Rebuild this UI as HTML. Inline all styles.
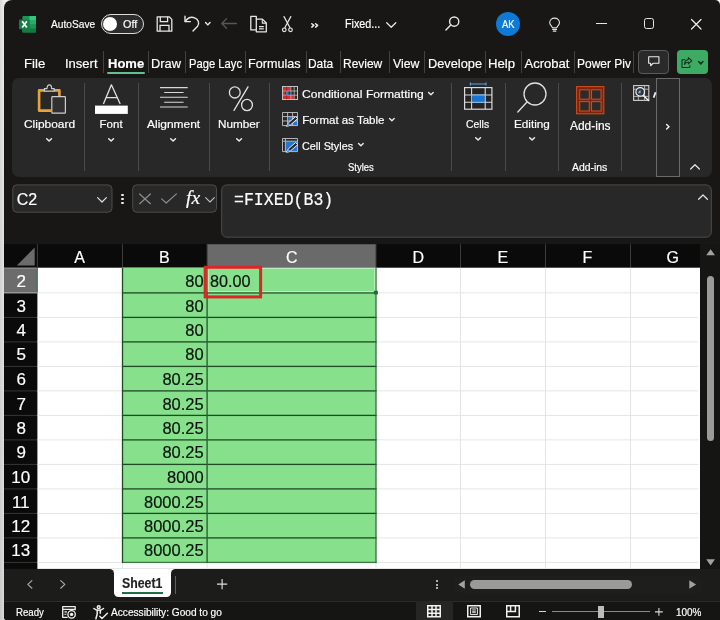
<!DOCTYPE html>
<html><head><meta charset="utf-8"><title>Excel</title>
<style>
html,body{margin:0;padding:0;}
body{width:720px;height:620px;overflow:hidden;position:relative;background:#fff;font-family:"Liberation Sans",sans-serif;}
.a{position:absolute;}
.t{position:absolute;white-space:pre;line-height:1;transform-origin:0 50%;}
#txt{position:absolute;left:0;top:0;width:720px;height:620px;will-change:transform;-webkit-text-stroke:0.18px currentColor;}
svg{position:absolute;overflow:visible;}
#win{left:4px;top:0;width:716px;height:620px;background:#191715;border-radius:8px 5px 0 3px;}
#lstrip{left:0;top:0;width:8px;height:620px;background:linear-gradient(90deg,rgba(0,0,0,.09),rgba(0,0,0,0) 4.5px),linear-gradient(180deg,#eeeeee,#e6e8e8 30%,#dcdcdc 100%);}
.sep{width:1px;background:#4b4b4b;}
.tsep{width:1px;background:#424242;top:50.5px;height:22.5px;}
.hl{height:1px;background:#e1e1e1;left:37.5px;width:662.5px;}
.vl{width:1px;background:#e1e1e1;top:268px;height:301px;}
</style></head><body>
<div class="a" id="lstrip"></div>
<div class="a" id="win"></div>

<!-- ribbon panel -->
<div class="a" style="left:12px;top:77.5px;width:699.5px;height:99.5px;background:#282828;border-radius:7px;"></div>
<!-- tab separators -->
<div class="a tsep" style="left:103px"></div><div class="a tsep" style="left:147.5px"></div><div class="a tsep" style="left:185px"></div>
<div class="a tsep" style="left:245px"></div><div class="a tsep" style="left:305.5px"></div><div class="a tsep" style="left:339.5px"></div>
<div class="a tsep" style="left:388.5px"></div><div class="a tsep" style="left:424px"></div><div class="a tsep" style="left:484.5px"></div>
<div class="a tsep" style="left:520.5px"></div><div class="a tsep" style="left:573.5px"></div><div class="a tsep" style="left:633.2px"></div>
<!-- Home underline -->
<div class="a" style="left:107.4px;top:72px;width:37.5px;height:2px;background:#62c28d;border-radius:1px;"></div>
<!-- comment & share buttons -->
<div class="a" style="left:638.1px;top:50px;width:30.6px;height:24px;background:#2a2a2a;border:1px solid #5a5a5a;border-radius:4px;box-sizing:border-box;"></div>
<div class="a" style="left:676.9px;top:50px;width:31.2px;height:24px;background:#3dab63;border-radius:4px;"></div>
<!-- ribbon separators -->
<div class="a sep" style="left:84px;top:82.5px;height:88px"></div>
<div class="a sep" style="left:138.3px;top:82.5px;height:88px"></div>
<div class="a sep" style="left:209px;top:82.5px;height:88px"></div>
<div class="a sep" style="left:269.3px;top:82.5px;height:88px"></div>
<div class="a sep" style="left:451.2px;top:82.5px;height:88px"></div>
<div class="a sep" style="left:504.7px;top:82.5px;height:88px"></div>
<div class="a sep" style="left:558px;top:82.5px;height:88px"></div>
<div class="a sep" style="left:621px;top:82.5px;height:88px"></div>
<!-- ribbon scroll btn -->
<div class="a" style="left:655.6px;top:77.5px;width:24.2px;height:99px;background:#282828;border:1px solid #6a6a6a;box-sizing:border-box;"></div>

<!-- formula bar -->
<svg style="left:0;top:0" width="720" height="620" viewBox="0 0 720 620" fill="#282828" stroke="#4c4c4c" stroke-width="1">
<rect x="12.8" y="184.9" width="99.2" height="27.3" rx="4"/>
<rect x="132.7" y="184.9" width="83.8" height="27.3" rx="4"/>
<rect x="221.7" y="184.9" width="489.6" height="52.3" rx="5"/>
</svg>
<!-- grid -->
<svg style="left:0;top:0" width="720" height="620" viewBox="0 0 720 620">
<rect x="4" y="244.2" width="696" height="324.7" fill="#0a0a0a"/>
<rect x="37.4" y="267.7" width="662.6" height="301.2" fill="#fff"/>
<rect x="207.1" y="244.2" width="168.9" height="23.5" fill="#6a6a6a"/>
<rect x="4" y="267.9" width="33" height="24.9" fill="#6c6c6c"/>
<rect x="4" y="267.6" width="33" height="1" fill="#9a9a9a"/>
<rect x="4" y="292.30" width="33" height="1.1" fill="#b4b4b4"/>
<rect x="36.6" y="267.7" width="1.1" height="25.1" fill="#3f6f57"/>
<rect x="36.90" y="244.2" width="1" height="23.5" fill="#3c3c3c"/>
<rect x="122.00" y="244.2" width="1" height="23.5" fill="#3c3c3c"/>
<rect x="206.60" y="244.2" width="1" height="23.5" fill="#3c3c3c"/>
<rect x="375.50" y="244.2" width="1" height="23.5" fill="#3c3c3c"/>
<rect x="460.00" y="244.2" width="1" height="23.5" fill="#3c3c3c"/>
<rect x="545.00" y="244.2" width="1" height="23.5" fill="#3c3c3c"/>
<rect x="630.00" y="244.2" width="1" height="23.5" fill="#3c3c3c"/>
<rect x="4" y="316.90" width="33" height="1" fill="#363636"/>
<rect x="4" y="341.40" width="33" height="1" fill="#363636"/>
<rect x="4" y="365.90" width="33" height="1" fill="#363636"/>
<rect x="4" y="390.40" width="33" height="1" fill="#363636"/>
<rect x="4" y="414.90" width="33" height="1" fill="#363636"/>
<rect x="4" y="439.40" width="33" height="1" fill="#363636"/>
<rect x="4" y="463.90" width="33" height="1" fill="#363636"/>
<rect x="4" y="488.40" width="33" height="1" fill="#363636"/>
<rect x="4" y="512.90" width="33" height="1" fill="#363636"/>
<rect x="4" y="537.40" width="33" height="1" fill="#363636"/>
<rect x="4" y="561.90" width="33" height="1" fill="#363636"/>
<rect x="37.4" y="292.40" width="661" height="1" fill="#e5e5e5"/>
<rect x="37.4" y="316.90" width="661" height="1" fill="#e5e5e5"/>
<rect x="37.4" y="341.40" width="661" height="1" fill="#e5e5e5"/>
<rect x="37.4" y="365.90" width="661" height="1" fill="#e5e5e5"/>
<rect x="37.4" y="390.40" width="661" height="1" fill="#e5e5e5"/>
<rect x="37.4" y="414.90" width="661" height="1" fill="#e5e5e5"/>
<rect x="37.4" y="439.40" width="661" height="1" fill="#e5e5e5"/>
<rect x="37.4" y="463.90" width="661" height="1" fill="#e5e5e5"/>
<rect x="37.4" y="488.40" width="661" height="1" fill="#e5e5e5"/>
<rect x="37.4" y="512.90" width="661" height="1" fill="#e5e5e5"/>
<rect x="37.4" y="537.40" width="661" height="1" fill="#e5e5e5"/>
<rect x="37.4" y="561.90" width="661" height="1" fill="#e5e5e5"/>
<rect x="122.00" y="267.7" width="1" height="301.2" fill="#e5e5e5"/>
<rect x="206.60" y="267.7" width="1" height="301.2" fill="#e5e5e5"/>
<rect x="375.50" y="267.7" width="1" height="301.2" fill="#e5e5e5"/>
<rect x="460.00" y="267.7" width="1" height="301.2" fill="#e5e5e5"/>
<rect x="545.00" y="267.7" width="1" height="301.2" fill="#e5e5e5"/>
<rect x="630.00" y="267.7" width="1" height="301.2" fill="#e5e5e5"/>
<rect x="122.5" y="267.7" width="253.5" height="294.70" fill="#86e08c"/>
<rect x="122" y="292.25" width="254.6" height="1.3" fill="#1f4a25"/>
<rect x="122" y="316.75" width="254.6" height="1.3" fill="#1f4a25"/>
<rect x="122" y="341.25" width="254.6" height="1.3" fill="#1f4a25"/>
<rect x="122" y="365.75" width="254.6" height="1.3" fill="#1f4a25"/>
<rect x="122" y="390.25" width="254.6" height="1.3" fill="#1f4a25"/>
<rect x="122" y="414.75" width="254.6" height="1.3" fill="#1f4a25"/>
<rect x="122" y="439.25" width="254.6" height="1.3" fill="#1f4a25"/>
<rect x="122" y="463.75" width="254.6" height="1.3" fill="#1f4a25"/>
<rect x="122" y="488.25" width="254.6" height="1.3" fill="#1f4a25"/>
<rect x="122" y="512.75" width="254.6" height="1.3" fill="#1f4a25"/>
<rect x="122" y="537.25" width="254.6" height="1.3" fill="#1f4a25"/>
<rect x="122" y="561.75" width="254.6" height="1.3" fill="#3a7a45"/>
<rect x="121.85" y="267.7" width="1.3" height="295.30" fill="#1d4a22"/>
<rect x="206.4" y="267.7" width="1.4" height="295.30" fill="#2c6435"/>
<rect x="375.4" y="267.7" width="1.2" height="295.30" fill="#2b6636"/>
<rect x="208.2" y="268.3" width="166.6" height="23.40" fill="none" stroke="rgba(255,255,255,.55)" stroke-width="1"/>
<rect x="373.9" y="290.80" width="4" height="3.6" fill="#1e6b3c"/>
<rect x="205.2" y="267.3" width="55.4" height="29.6" fill="none" stroke="#de2424" stroke-width="3"/>
</svg>
<!-- v scrollbar -->
<div class="a" style="left:700px;top:244px;width:20px;height:325px;background:#151514;"></div>
<div class="a" style="left:706.5px;top:276px;width:7.4px;height:165px;background:#9b9b9b;border-radius:4px;"></div>

<!-- sheet tab bar -->
<div class="a" style="left:4px;top:569px;width:716px;height:31.5px;background:#fff;"></div>
<div class="a" style="left:4px;top:569px;width:109.7px;height:31.5px;background:#1c1c1a;border-radius:0 4.5px 0 0;"></div>
<div class="a" style="left:171.2px;top:569px;width:548.8px;height:31.5px;background:#1c1c1a;border-radius:4.5px 0 0 0;"></div>
<div class="a" style="left:100px;top:590px;width:90px;height:10.5px;background:#1c1c1a;"></div>
<div class="a" style="left:113.7px;top:569px;width:57.5px;height:28px;background:#fff;border-radius:0 0 4.5px 4.5px;"></div>
<div class="a" style="left:122px;top:592px;width:41px;height:2px;background:#1d7044;"></div>
<div class="a" style="left:175px;top:576px;width:1px;height:18px;background:#606060;"></div>
<div class="a" style="left:452.5px;top:576px;width:250px;height:16.5px;background:#1e1e1c;border-radius:8px;"></div>
<div class="a" style="left:470.2px;top:580px;width:161.8px;height:8.5px;background:#9a9a9a;border-radius:4.5px;"></div>
<!-- status bar -->
<div class="a" style="left:4px;top:600.5px;width:716px;height:19.5px;background:#151514;border-top:1px solid #2c2c2b;box-sizing:border-box;border-radius:0 0 0 3px;"></div>
<div class="a" style="left:415.5px;top:601px;width:37.5px;height:19px;background:#262625;"></div>
<div class="a" style="left:552px;top:611.2px;width:98px;height:1px;background:#8a8a8a;"></div>
<div class="a" style="left:598.2px;top:606px;width:5.4px;height:11.5px;background:#bdbdbd;"></div>

<!-- ===== TITLE BAR ICONS ===== -->
<!-- excel logo -->
<svg style="left:19.3px;top:15.6px" width="17" height="16.4" viewBox="0 0 17 16.4">
  <rect x="3.4" y="0" width="13.6" height="16.4" rx="1" fill="#1c9454"/>
  <rect x="10.4" y="0" width="6.6" height="4.4" fill="#35c583"/>
  <rect x="10.4" y="4.4" width="6.6" height="4" fill="#27ad69"/>
  <rect x="10.4" y="8.4" width="6.6" height="4" fill="#1c9454"/>
  <rect x="10.4" y="12.4" width="6.6" height="4" fill="#15793f"/>
  <rect x="3.4" y="8.4" width="7" height="8" fill="#167a42"/>
  <rect x="0" y="3.4" width="10.7" height="9.9" rx="1" fill="#128044"/>
  <path d="M3.2 5.2 L7.9 11.6 M7.9 5.2 L3.2 11.6" stroke="#fff" stroke-width="1.7" fill="none"/>
</svg>
<!-- autosave toggle -->
<div class="a" style="left:100.7px;top:14.2px;width:43.5px;height:19.8px;border:1.3px solid #dcdcdc;background:#2c2c2c;border-radius:11px;box-sizing:border-box;"></div>
<div class="a" style="left:103.3px;top:17.1px;width:14px;height:14px;border-radius:50%;background:#fff;"></div>
<!-- save -->
<svg style="left:155.5px;top:16px" width="17" height="16" viewBox="0 0 17 16" fill="none" stroke="#e6e6e6" stroke-width="1.3">
  <path d="M1.2 0.8 H13.2 L15.8 3.4 V15.2 H1.2 Z" stroke-linejoin="round"/>
  <path d="M4.3 0.8 V5.6 H11.6 V0.8"/>
  <path d="M4 15.2 V9.3 H13 V15.2"/>
</svg>
<!-- undo -->
<svg style="left:184px;top:15px" width="16" height="17" viewBox="0 0 16 17" fill="none" stroke="#e6e6e6" stroke-width="1.4" stroke-linecap="round" stroke-linejoin="round">
  <path d="M1 1.2 V6.6 H6.4"/>
  <path d="M1.3 6.4 C3.5 3.2 7.2 1.6 10.6 2.8 C14.4 4.2 15.8 8.2 13.6 11.2 L9 16"/>
</svg>
<svg style="left:205.2px;top:22px" width="5.6" height="3.6" viewBox="0 0 6 4" fill="none" stroke="#ececec" stroke-width="1.6" stroke-linecap="round" stroke-linejoin="round"><path d="M0.5 0.6 L3 3.2 L5.5 0.6"/></svg>
<!-- back arrow dim -->
<svg style="left:221px;top:17.5px" width="16" height="11" viewBox="0 0 16 11" fill="none" stroke="#575757" stroke-width="1.3" stroke-linecap="round" stroke-linejoin="round"><path d="M15.5 5.5 H1 M5.5 0.8 L0.8 5.5 L5.5 10.2"/></svg>
<!-- copy -->
<svg style="left:250px;top:15px" width="17" height="17.5" viewBox="0 0 17 17.5" fill="none" stroke="#e6e6e6" stroke-width="1.3" stroke-linejoin="round">
  <path d="M6 14.9 H0.8 V1.4 H6.3 V4"/>
  <path d="M6.3 4.1 H12.4 L16.3 8 V16.8 H6.3 Z" fill="#191715"/>
  <path d="M12.3 4.1 V8.1 H16.3" stroke-width="1.1"/>
  <path d="M9 11.6 H13.8 M9 13.8 H13.8" stroke-width="1.2"/>
</svg>
<!-- scissors -->
<svg style="left:281.5px;top:15.6px" width="10.8" height="16.4" viewBox="0 0 10.8 16.4" fill="none" stroke="#e6e6e6" stroke-width="1.2" stroke-linecap="round">
  <path d="M2 0.6 L8 11.8 M8.8 0.6 L2.8 11.8"/>
  <circle cx="2.3" cy="13.8" r="1.8"/><circle cx="8.5" cy="13.8" r="1.8"/>
</svg>
<!-- >> -->
<svg style="left:311.4px;top:22.6px" width="7.8" height="4.8" viewBox="0 0 7.8 4.8" fill="none" stroke="#ececec" stroke-width="1.5" stroke-linecap="round" stroke-linejoin="round"><path d="M0.8 0.7 L2.8 2.4 L0.8 4.1 M4.6 0.7 L6.6 2.4 L4.6 4.1"/></svg>
<!-- title chevron -->
<svg style="left:386px;top:21.5px" width="10.5" height="6" viewBox="0 0 10.5 6" fill="none" stroke="#e6e6e6" stroke-width="1.3" stroke-linecap="round" stroke-linejoin="round"><path d="M0.7 0.7 L5.25 5.2 L9.8 0.7"/></svg>
<!-- search -->
<svg style="left:445px;top:16px" width="15" height="15" viewBox="0 0 15 15" fill="none" stroke="#e6e6e6" stroke-width="1.4" stroke-linecap="round"><circle cx="9.2" cy="5.6" r="4.6"/><path d="M5.8 9 L0.9 14"/></svg>
<!-- avatar -->
<div class="a" style="left:496px;top:12.2px;width:24px;height:24px;border-radius:50%;background:#0f7ad6;"></div>
<!-- bulb -->
<svg style="left:548.6px;top:16.8px" width="11.2" height="15.4" viewBox="0 0 12.5 16" fill="none" stroke="#e6e6e6" stroke-width="1.2" stroke-linecap="round" stroke-linejoin="round">
  <path d="M3.8 11.4 C3.6 9.6 0.8 8.6 0.8 5.8 C0.8 2.8 3.2 0.7 6.25 0.7 C9.3 0.7 11.7 2.8 11.7 5.8 C11.7 8.6 8.9 9.6 8.7 11.4 Z"/>
  <path d="M4 13.2 H8.5 M4.8 15.2 H7.7"/>
</svg>
<!-- min / max / close -->
<div class="a" style="left:596px;top:22.6px;width:10.5px;height:1.2px;background:#e6e6e6;"></div>
<div class="a" style="left:643.5px;top:18.3px;width:10.5px;height:10.5px;border:1.3px solid #e6e6e6;border-radius:2.5px;box-sizing:border-box;"></div>
<svg style="left:691px;top:19px" width="10.5" height="10.5" viewBox="0 0 10.5 10.5" fill="none" stroke="#f0f0f0" stroke-width="1.2" stroke-linecap="round"><path d="M0.5 0.5 L10 10 M10 0.5 L0.5 10"/></svg>

<!-- comment icon -->
<svg style="left:647.8px;top:56.2px" width="11.6" height="10.8" viewBox="0 0 14 13" fill="none" stroke="#ededed" stroke-width="1.3" stroke-linejoin="round"><path d="M0.8 0.8 H13.2 V8.8 H6 L3.2 11.8 V8.8 H0.8 Z"/></svg>
<!-- share icon -->
<svg style="left:681.2px;top:56.8px" width="11.8" height="11.4" viewBox="0 0 14 14" fill="none" stroke="#10331c" stroke-width="1.3" stroke-linejoin="round" stroke-linecap="round">
  <path d="M4.6 3.4 H1 V13 H10.6 V10.6"/>
  <path d="M8.8 0.8 L13 4.6 L8.8 8.4 V6.2 C6.4 6.2 5 7.2 4 9.2 C4.2 5.8 5.8 3.4 8.8 3 Z"/>
</svg>
<svg style="left:698.4px;top:60.8px" width="5.6" height="3.6" viewBox="0 0 6 4" fill="none" stroke="#10331c" stroke-width="1.7" stroke-linecap="round" stroke-linejoin="round"><path d="M0.6 0.6 L3 3.2 L5.4 0.6"/></svg>

<!-- ===== RIBBON ICONS ===== -->
<!-- clipboard -->
<svg style="left:37px;top:84px" width="30" height="31" viewBox="0 0 30 31" fill="none">
  <path d="M8 6.4 H2.1 V26.6 H14" stroke="#e9a23b" stroke-width="2.6" stroke-linejoin="round"/>
  <path d="M16.6 6.4 H22.4 V12" stroke="#e9a23b" stroke-width="2.6" stroke-linejoin="round"/>
  <path d="M7.4 7.2 V4.6 H10 C10 2.4 11 0.8 12.3 0.8 C13.6 0.8 14.6 2.4 14.6 4.6 H17.2 V7.2 Z" stroke="#cfcfcf" stroke-width="1.2" fill="#282828" stroke-linejoin="round"/>
  <rect x="14.8" y="12.6" width="13.6" height="16.6" rx="0.8" fill="#303030" stroke="#cdcdcd" stroke-width="1.2"/>
</svg>
<!-- Font A -->
<svg style="left:94.8px;top:84px" width="33" height="30" viewBox="0 0 33 30" fill="none">
  <path d="M8.4 20 L16.4 0.8 L25.2 20 M11 13.6 H22.4" stroke="#e2e2e2" stroke-width="1.3" stroke-linejoin="round"/>
  <rect x="0" y="21.6" width="32.8" height="8.3" fill="#fff"/>
</svg>
<!-- alignment -->
<svg style="left:159.8px;top:87px" width="28" height="21" viewBox="0 0 28 21" stroke="#d8d8d8" stroke-width="1.1">
  <path d="M0 0.6 H27.7 M4.2 5.5 H23.6 M0 10.2 H27.7 M4.2 15.3 H23.6 M0 20 H27.7"/>
</svg>
<!-- percent -->
<svg style="left:227.5px;top:85.5px" width="25" height="25" viewBox="0 0 25 25" fill="none" stroke="#e0e0e0" stroke-width="1.3" stroke-linecap="round">
  <ellipse cx="6.8" cy="6.4" rx="5.4" ry="5.6"/><ellipse cx="19" cy="19" rx="5.4" ry="5.6"/><path d="M20 0.8 L6 24.4"/>
</svg>
<!-- Conditional formatting -->
<svg style="left:282px;top:86px" width="16" height="14" viewBox="0 0 16 14">
  <rect x="0.5" y="0.5" width="15" height="13" fill="#2a2a2a" stroke="#c4c4c4" stroke-width="1"/>
  <rect x="1" y="1" width="7.6" height="3.8" fill="#e22a2a"/>
  <rect x="1" y="5.3" width="2.2" height="3.6" fill="#e22a2a"/>
  <rect x="3.8" y="5.3" width="2.8" height="3.6" fill="#2f7de0"/>
  <rect x="1" y="9.4" width="10.6" height="3.6" fill="#e22a2a"/>
  <path d="M8.9 0.5 V13.5 M12.2 0.5 V13.5 M0.5 5 H15.5 M0.5 9.2 H15.5" stroke="#bdbdbd" stroke-width="0.8"/>
  <path d="M4.6 0.5 V5 M4.6 9.2 V13.5" stroke="#8a1a1a" stroke-width="0.6"/>
</svg>
<!-- Format as table -->
<svg style="left:282px;top:112.4px" width="16.4" height="14.6" viewBox="0 0 16.4 14.6" fill="none">
  <rect x="6.4" y="4.4" width="9.4" height="9.2" fill="#2677d4"/>
  <path d="M0.5 0.5 H15.5 V13.6 H0.5 Z M0.5 4.6 H15.5 M0.5 9 H15.5 M5.6 0.5 V13.6 M10.6 0.5 V13.6" stroke="#c4c4c4" stroke-width="0.9"/>
  <path d="M13.6 4.6 L15.8 6.6 L8.6 12.8 C7.4 13.8 5.6 14.4 4.2 14.2 C5.4 13.4 5.2 12 6.4 10.8 Z" fill="#2a2a2a" stroke="#ececec" stroke-width="1" stroke-linejoin="round"/>
  <path d="M6.6 11 L8.4 12.8 C7.4 13.6 5.8 14.2 4.6 14 C5.6 13.2 5.6 12 6.6 11 Z" fill="#5aa0ea"/>
</svg>
<!-- Cell styles -->
<svg style="left:282px;top:138px" width="16.4" height="14.6" viewBox="0 0 16.4 14.6" fill="none">
  <rect x="3.6" y="3.4" width="11.6" height="9.8" fill="#2677d4"/>
  <path d="M0.5 0.5 H15.5 V13.6 H0.5 Z M0.5 3.2 H15.5 M3.4 0.5 V13.6" stroke="#c4c4c4" stroke-width="0.9"/>
  <path d="M13.6 4.6 L15.8 6.6 L8.6 12.8 C7.4 13.8 5.6 14.4 4.2 14.2 C5.4 13.4 5.2 12 6.4 10.8 Z" fill="#2a2a2a" stroke="#ececec" stroke-width="1" stroke-linejoin="round"/>
  <path d="M6.6 11 L8.4 12.8 C7.4 13.6 5.8 14.2 4.6 14 C5.6 13.2 5.6 12 6.6 11 Z" fill="#5aa0ea"/>
</svg>
<!-- cells -->
<svg style="left:464px;top:81.5px" width="28.5" height="27.5" viewBox="0 0 28.5 27.5" fill="none">
  <path d="M6.4 2 H22 M6.4 0.5 V3.5 M22 0.5 V3.5" stroke="#5aa3e6" stroke-width="1.1"/>
  <rect x="0.6" y="5.6" width="27.3" height="21.6" fill="#232323" stroke="#dadada" stroke-width="1.2"/>
  <path d="M7.6 5.6 V27.2 M21.2 5.6 V27.2 M0.6 13 H28 M0.6 20.2 H28" stroke="#dadada" stroke-width="1.1"/>
  <rect x="8.2" y="13.6" width="12.4" height="6" fill="#1574d4"/>
  <path d="M7.6 13 H21.2 V20.2 H7.6 Z" stroke="#7db9f0" stroke-width="0.9"/>
</svg>
<!-- editing magnifier -->
<svg style="left:517px;top:82px" width="30" height="31" viewBox="0 0 30 31" fill="none" stroke="#e0e0e0" stroke-width="1.3" stroke-linecap="round"><circle cx="18" cy="12" r="11"/><path d="M10 20 L0.8 30"/></svg>
<!-- add-ins -->
<svg style="left:575.8px;top:85.7px" width="28.4" height="28.4" viewBox="0 0 28.4 28.4" fill="none">
  <rect x="0.6" y="0.6" width="27.2" height="27.2" fill="#7c230b" stroke="#cc4c1d" stroke-width="1.1"/>
  <rect x="3.7" y="3.8" width="9.6" height="9.4" fill="#2b2b2b" stroke="#cc4c1d" stroke-width="1.1"/>
  <rect x="15.5" y="3.8" width="9.6" height="9.4" fill="#2b2b2b" stroke="#cc4c1d" stroke-width="1.1"/>
  <rect x="3.7" y="15.6" width="9.6" height="9.4" fill="#2b2b2b" stroke="#cc4c1d" stroke-width="1.1"/>
  <rect x="15.5" y="15.6" width="9.6" height="9.4" fill="#2b2b2b" stroke="#cc4c1d" stroke-width="1.1"/>
</svg>
<!-- analyze data partial -->
<svg style="left:632.8px;top:85px" width="24" height="16.5" viewBox="0 0 24 16.5" fill="none">
  <rect x="0.6" y="0.6" width="15.2" height="14.8" fill="#2e2e2e" stroke="#d0d0d0" stroke-width="1.1"/>
  <path d="M0.6 4.2 H15.8 M0.6 11.4 H15.8 M11.6 0.6 V15.4 M5.4 11.4 V15.4" stroke="#bdbdbd" stroke-width="0.9"/>
  <circle cx="7.2" cy="6.9" r="4.3" fill="#30363c" stroke="#f2f2f2" stroke-width="1.2"/>
  <path d="M5.2 8.2 C5.2 6.6 6.2 5.4 7.6 5.2 V8.2 Z" fill="#7db4e6"/>
  <path d="M10.4 10.4 L15.6 15.4" stroke="#f2f2f2" stroke-width="1.4" stroke-linecap="round"/>
  <path d="M20.6 12.6 L22.6 7.2" stroke="#f0f0f0" stroke-width="1.8"/>
</svg>
<!-- scroll right chevron -->
<svg style="left:666px;top:124px" width="3.8" height="5.6" viewBox="0 0 5 7.5" fill="none" stroke="#f4f4f4" stroke-width="1.9" stroke-linecap="round" stroke-linejoin="round"><path d="M0.8 0.7 L4 3.75 L0.8 6.8"/></svg>
<!-- collapse ^ -->
<svg style="left:690.3px;top:163.7px" width="10" height="5.6" viewBox="0 0 10 5.6" fill="none" stroke="#e6e6e6" stroke-width="1.2" stroke-linecap="round" stroke-linejoin="round"><path d="M0.6 5 L5 0.7 L9.4 5"/></svg>
<!-- label chevrons (group dropdowns) -->
<svg style="left:46.2px;top:137.7px" width="6.2" height="3.8" viewBox="0 0 6.2 3.8" fill="none" stroke="#ececec" stroke-width="1.5" stroke-linecap="round" stroke-linejoin="round"><path d="M0.7 0.7 L3.1 3 L5.5 0.7"/></svg>
<svg style="left:107.9px;top:137.7px" width="6.2" height="3.8" viewBox="0 0 6.2 3.8" fill="none" stroke="#ececec" stroke-width="1.5" stroke-linecap="round" stroke-linejoin="round"><path d="M0.7 0.7 L3.1 3 L5.5 0.7"/></svg>
<svg style="left:170.2px;top:137.7px" width="6.2" height="3.8" viewBox="0 0 6.2 3.8" fill="none" stroke="#ececec" stroke-width="1.5" stroke-linecap="round" stroke-linejoin="round"><path d="M0.7 0.7 L3.1 3 L5.5 0.7"/></svg>
<svg style="left:236.2px;top:137.7px" width="6.2" height="3.8" viewBox="0 0 6.2 3.8" fill="none" stroke="#ececec" stroke-width="1.5" stroke-linecap="round" stroke-linejoin="round"><path d="M0.7 0.7 L3.1 3 L5.5 0.7"/></svg>
<svg style="left:474.8px;top:137.3px" width="6.2" height="3.8" viewBox="0 0 6.2 3.8" fill="none" stroke="#ececec" stroke-width="1.5" stroke-linecap="round" stroke-linejoin="round"><path d="M0.7 0.7 L3.1 3 L5.5 0.7"/></svg>
<svg style="left:528.6px;top:137.3px" width="6.2" height="3.8" viewBox="0 0 6.2 3.8" fill="none" stroke="#ececec" stroke-width="1.5" stroke-linecap="round" stroke-linejoin="round"><path d="M0.7 0.7 L3.1 3 L5.5 0.7"/></svg>
<svg style="left:428px;top:92px" width="5.8" height="3.5" viewBox="0 0 5.8 3.5" fill="none" stroke="#ececec" stroke-width="1.4" stroke-linecap="round" stroke-linejoin="round"><path d="M0.6 0.6 L2.9 2.8 L5.2 0.6"/></svg>
<svg style="left:388.5px;top:117.6px" width="5.8" height="3.5" viewBox="0 0 5.8 3.5" fill="none" stroke="#ececec" stroke-width="1.4" stroke-linecap="round" stroke-linejoin="round"><path d="M0.6 0.6 L2.9 2.8 L5.2 0.6"/></svg>
<svg style="left:357.6px;top:143.3px" width="5.8" height="3.5" viewBox="0 0 5.8 3.5" fill="none" stroke="#ececec" stroke-width="1.4" stroke-linecap="round" stroke-linejoin="round"><path d="M0.6 0.6 L2.9 2.8 L5.2 0.6"/></svg>

<!-- ===== FORMULA BAR ICONS ===== -->
<svg style="left:96.7px;top:196.7px" width="10" height="5.8" viewBox="0 0 10 5.8" fill="none" stroke="#e0e0e0" stroke-width="1.2" stroke-linecap="round" stroke-linejoin="round"><path d="M0.6 0.6 L5 5 L9.4 0.6"/></svg>
<div class="a" style="left:120.9px;top:193.5px;width:2.8px;height:2.8px;background:#ececec;border-radius:35%"></div>
<div class="a" style="left:120.9px;top:197.6px;width:2.8px;height:2.8px;background:#ececec;border-radius:35%"></div>
<div class="a" style="left:120.9px;top:201.7px;width:2.8px;height:2.8px;background:#ececec;border-radius:35%"></div>
<svg style="left:139px;top:193px" width="12" height="11.7" viewBox="0 0 11.4 10.4" fill="none" stroke="#8c8c8c" stroke-width="1.2" stroke-linecap="round"><path d="M0.6 0.6 L10.8 9.8 M10.8 0.6 L0.6 9.8"/></svg>
<svg style="left:161px;top:193.3px" width="16" height="10.9" viewBox="0 0 16 10.4" fill="none" stroke="#8c8c8c" stroke-width="1.2" stroke-linecap="round" stroke-linejoin="round"><path d="M0.6 5.6 L5.2 9.8 L15.4 0.6"/></svg>
<svg style="left:205px;top:197px" width="10" height="5.6" viewBox="0 0 10 5.6" fill="none" stroke="#bdbdbd" stroke-width="1.1" stroke-linecap="round" stroke-linejoin="round"><path d="M0.6 0.6 L5 5 L9.4 0.6"/></svg>
<svg style="left:697.5px;top:193.6px" width="10" height="6.2" viewBox="0 0 10 5.6" fill="none" stroke="#e6e6e6" stroke-width="1.2" stroke-linecap="round" stroke-linejoin="round"><path d="M0.6 5 L5 0.7 L9.4 5"/></svg>

<!-- ===== GRID ICONS ===== -->
<svg style="left:15.7px;top:247px" width="19.5" height="19" viewBox="0 0 16 16"><path d="M15.5 0.5 V15.5 H0.5 Z" fill="#6b6b6b"/></svg>
<svg style="left:705.6px;top:249.4px" width="9.2" height="6.4" viewBox="0 0 9.2 6.4"><path d="M4.6 0.3 L9 6.2 H0.2 Z" fill="#a2a2a2"/></svg>
<svg style="left:705.6px;top:559px" width="9.2" height="6.6" viewBox="0 0 9.2 6.6"><path d="M0.2 0.3 H9 L4.6 6.4 Z" fill="#a2a2a2"/></svg>

<!-- ===== TAB BAR ICONS ===== -->
<svg style="left:27.2px;top:579.7px" width="5.6" height="8.8" viewBox="0 0 5.6 8.8" fill="none" stroke="#a8a8a8" stroke-width="1.2" stroke-linecap="round" stroke-linejoin="round"><path d="M4.9 0.6 L0.8 4.4 L4.9 8.2"/></svg>
<svg style="left:60px;top:579.7px" width="5.6" height="8.8" viewBox="0 0 5.6 8.8" fill="none" stroke="#a8a8a8" stroke-width="1.2" stroke-linecap="round" stroke-linejoin="round"><path d="M0.7 0.6 L4.8 4.4 L0.7 8.2"/></svg>
<svg style="left:217.4px;top:579.2px" width="10.2" height="10.2" viewBox="0 0 10.6 10.6" stroke="#e0e0e0" stroke-width="1.2"><path d="M5.3 0 V10.6 M0 5.3 H10.6"/></svg>
<div class="a" style="left:436.2px;top:580.3px;width:2.2px;height:2.2px;background:#e0e0e0;border-radius:50%"></div>
<div class="a" style="left:436.2px;top:583.8px;width:2.2px;height:2.2px;background:#e0e0e0;border-radius:50%"></div>
<div class="a" style="left:436.2px;top:587.3px;width:2.2px;height:2.2px;background:#e0e0e0;border-radius:50%"></div>
<svg style="left:457.8px;top:580px" width="7" height="9" viewBox="0 0 7 9"><path d="M6.8 0.3 V8.7 L0.3 4.5 Z" fill="#a2a2a2"/></svg>
<svg style="left:689px;top:580px" width="7.4" height="9" viewBox="0 0 7.4 9"><path d="M0.3 0.3 V8.7 L7.1 4.5 Z" fill="#a2a2a2"/></svg>

<!-- ===== STATUS ICONS ===== -->
<!-- macro record -->
<svg style="left:62px;top:606px" width="14.5" height="12.6" viewBox="0 0 14.5 12.6" fill="none" stroke="#f0f0f0" stroke-width="1.3">
  <path d="M13.2 4.2 V0.7 H0.7 V11.3 H5.6 M0.7 3.3 H13.2" stroke-linejoin="round"/>
  <path d="M2.4 5.9 H5 M2.4 8.3 H4.4" stroke-width="1.1"/>
  <circle cx="9.6" cy="8.4" r="3.7" fill="#151514"/><circle cx="9.6" cy="8.4" r="1.7" fill="#f0f0f0" stroke="none"/>
</svg>
<!-- accessibility -->
<svg style="left:93px;top:604.8px" width="15.5" height="15.2" viewBox="0 0 15.5 15.2" fill="none" stroke="#f0f0f0" stroke-width="1.5" stroke-linecap="round" stroke-linejoin="round">
  <circle cx="5.7" cy="2.2" r="1.4"/>
  <path d="M0.9 3.5 C2.4 4.8 4 5.3 5.7 5.3 C7.4 5.3 9 4.8 10.5 3.5"/>
  <path d="M4.2 5.4 V9 L2.9 13.8 M7.3 5.4 V8.2"/>
  <path d="M6.8 11.2 L9 13.4 L14.4 8.2" stroke-width="1.4"/>
</svg>
<!-- normal view grid -->
<svg style="left:426.7px;top:605.2px" width="14" height="12.6" viewBox="0 0 14 12.6" fill="none" stroke="#f4f4f4" stroke-width="1.5"><path d="M0.75 0.75 H13.25 V11.85 H0.75 Z M5 0.75 V11.85 M9 0.75 V11.85 M0.75 4.5 H13.25 M0.75 8.2 H13.25"/></svg>
<!-- page layout -->
<svg style="left:466.7px;top:605.2px" width="14" height="12.6" viewBox="0 0 14 12.6" fill="none" stroke="#f0f0f0"><path d="M0.75 0.75 H13.25 V11.85 H0.75 Z" stroke-width="1.5"/><path d="M3.6 3 H10.4 V9.6 H3.6 Z" stroke-width="1"/><path d="M5.2 4.9 H8.8 M5.2 6.3 H8.8 M5.2 7.7 H8.8" stroke-width="0.9"/></svg>
<!-- page break -->
<svg style="left:506.3px;top:605.2px" width="14" height="12.6" viewBox="0 0 14 12.6" fill="none" stroke="#f0f0f0" stroke-width="1.5"><path d="M0.75 0.75 H13.25 V11.85 H0.75 Z M4.6 0.75 V6.6 H9.4 V0.75 M0.75 6.6 H4.6"/></svg>
<!-- zoom minus / plus -->
<div class="a" style="left:538.7px;top:611.1px;width:7.2px;height:1.2px;background:#d8d8d8;"></div>
<svg style="left:654.7px;top:607.8px" width="7.8" height="7.8" viewBox="0 0 7.8 7.8" stroke="#d8d8d8" stroke-width="1.1"><path d="M3.9 0 V7.8 M0 3.9 H7.8"/></svg>

<div id="txt">
<span class="t" style="left:51.20px;top:19px;font-size:11.5px;color:#fff;transform:scale(0.8853,1);transform-origin:0 9px;">AutoSave</span>
<span class="t" style="left:122.50px;top:19px;font-size:11.5px;color:#fff;transform:scale(0.9415,1);transform-origin:0 9px;">Off</span>
<span class="t" style="left:345.00px;top:18px;font-size:12px;color:#fff;transform:scale(0.8972,1);transform-origin:0 10px;">Fixed...</span>
<span class="t" style="left:501.80px;top:19px;font-size:10.5px;color:#fff;transform:scale(0.8926,1);transform-origin:0 9px;">AK</span>
<span class="t" style="left:23.99px;top:57px;font-size:13px;color:#fff;transform:scale(1.0143,1);transform-origin:0 11px;">File</span>
<span class="t" style="left:65.00px;top:57px;font-size:13px;color:#fff;">Insert</span>
<span class="t" style="left:151.21px;top:57px;font-size:13px;color:#fff;transform:scale(0.9851,1);transform-origin:0 11px;">Draw</span>
<span class="t" style="left:188.54px;top:57px;font-size:13px;color:#fff;transform:scale(0.8632,1);transform-origin:0 11px;">Page Layc</span>
<span class="t" style="left:247.93px;top:57px;font-size:13px;color:#fff;transform:scale(0.9706,1);transform-origin:0 11px;">Formulas</span>
<span class="t" style="left:308.48px;top:57px;font-size:13px;color:#fff;transform:scale(0.9181,1);transform-origin:0 11px;">Data</span>
<span class="t" style="left:343.48px;top:57px;font-size:13px;color:#fff;transform:scale(0.9210,1);transform-origin:0 11px;">Review</span>
<span class="t" style="left:393.30px;top:57px;font-size:13px;color:#fff;transform:scale(0.9456,1);transform-origin:0 11px;">View</span>
<span class="t" style="left:427.62px;top:57px;font-size:13px;color:#fff;transform:scale(0.9833,1);transform-origin:0 11px;">Develope</span>
<span class="t" style="left:488.19px;top:57px;font-size:13px;color:#fff;transform:scale(1.0115,1);transform-origin:0 11px;">Help</span>
<span class="t" style="left:524.60px;top:57px;font-size:13px;color:#fff;">Acrobat</span>
<span class="t" style="left:576.68px;top:57px;font-size:13px;color:#fff;transform:scale(0.9204,1);transform-origin:0 11px;">Power Piv</span>
<span class="t" style="left:108.00px;top:57px;font-size:13px;color:#fff;font-weight:700;">Home</span>
<span class="t" style="left:24.00px;top:119px;font-size:11.5px;color:#fff;transform:scale(1.0384,1);transform-origin:0 9px;">Clipboard</span>
<span class="t" style="left:99.60px;top:119px;font-size:11.5px;color:#fff;">Font</span>
<span class="t" style="left:146.60px;top:119px;font-size:11.5px;color:#fff;transform:scale(1.0396,1);transform-origin:0 9px;">Alignment</span>
<span class="t" style="left:218.40px;top:119px;font-size:11.5px;color:#fff;transform:scale(1.0202,1);transform-origin:0 9px;">Number</span>
<span class="t" style="left:302.20px;top:89px;font-size:11.5px;color:#fff;transform:scale(1.0520,1);transform-origin:0 9px;">Conditional Formatting</span>
<span class="t" style="left:302.20px;top:115px;font-size:11.5px;color:#fff;">Format as Table</span>
<span class="t" style="left:302.20px;top:141px;font-size:11.5px;color:#fff;transform:scale(0.9400,1);transform-origin:0 9px;">Cell Styles</span>
<span class="t" style="left:347.50px;top:162px;font-size:10.5px;color:#fff;transform:scale(0.8997,1);transform-origin:0 9px;">Styles</span>
<span class="t" style="left:466.20px;top:119px;font-size:11.5px;color:#fff;transform:scale(0.9027,1);transform-origin:0 9px;">Cells</span>
<span class="t" style="left:513.70px;top:119px;font-size:11.5px;color:#fff;transform:scale(1.0211,1);transform-origin:0 9px;">Editing</span>
<span class="t" style="left:569.50px;top:120px;font-size:12px;color:#fff;transform:scale(0.9954,1);transform-origin:0 10px;">Add-ins</span>
<span class="t" style="left:572.00px;top:162px;font-size:10.5px;color:#fff;transform:scale(0.9901,1);transform-origin:0 9px;">Add-ins</span>
<span class="t" style="left:16.70px;top:192px;font-size:16px;color:#fff;">C2</span>
<span class="t" style="left:233.90px;top:193px;font-size:16.5px;color:#fff;font-family:'Liberation Mono', monospace;transform:scale(1.0029,1.1);transform-origin:0 12px;">=FIXED(B3)</span>
<span class="t" style="left:185.80px;top:189px;font-size:18.5px;color:#fff;font-family:'Liberation Serif', serif;font-style:italic;transform:scale(1.0608,1);transform-origin:0 15px;">fx</span>
<span class="t" style="left:74.20px;top:250px;font-size:16px;color:#fff;">A</span>
<span class="t" style="left:159.00px;top:250px;font-size:16px;color:#fff;">B</span>
<span class="t" style="left:286.00px;top:250px;font-size:16px;color:#fff;">C</span>
<span class="t" style="left:412.50px;top:250px;font-size:16px;color:#fff;">D</span>
<span class="t" style="left:497.50px;top:250px;font-size:16px;color:#fff;">E</span>
<span class="t" style="left:582.50px;top:250px;font-size:16px;color:#fff;">F</span>
<span class="t" style="left:666.50px;top:250px;font-size:16px;color:#fff;">G</span>
<span class="t" style="left:16.50px;top:273px;font-size:17px;color:#fff;">2</span>
<span class="t" style="left:16.50px;top:298px;font-size:17px;color:#fff;">3</span>
<span class="t" style="left:16.50px;top:322px;font-size:17px;color:#fff;">4</span>
<span class="t" style="left:16.50px;top:346px;font-size:17px;color:#fff;">5</span>
<span class="t" style="left:16.50px;top:371px;font-size:17px;color:#fff;">6</span>
<span class="t" style="left:16.50px;top:396px;font-size:17px;color:#fff;">7</span>
<span class="t" style="left:16.50px;top:420px;font-size:17px;color:#fff;">8</span>
<span class="t" style="left:16.50px;top:444px;font-size:17px;color:#fff;">9</span>
<span class="t" style="left:11.27px;top:469px;font-size:17px;color:#fff;">10</span>
<span class="t" style="left:11.90px;top:494px;font-size:17px;color:#fff;">11</span>
<span class="t" style="left:11.27px;top:518px;font-size:17px;color:#fff;">12</span>
<span class="t" style="left:11.27px;top:542px;font-size:17px;color:#fff;">13</span>
<span class="t" style="left:185.32px;top:273px;font-size:16.5px;color:#08140a;transform:scale(1.0000,1.05);transform-origin:0 14px;">80</span>
<span class="t" style="left:185.32px;top:298px;font-size:16.5px;color:#08140a;transform:scale(1.0000,1.05);transform-origin:0 14px;">80</span>
<span class="t" style="left:185.32px;top:322px;font-size:16.5px;color:#08140a;transform:scale(1.0000,1.05);transform-origin:0 14px;">80</span>
<span class="t" style="left:185.32px;top:346px;font-size:16.5px;color:#08140a;transform:scale(1.0000,1.05);transform-origin:0 14px;">80</span>
<span class="t" style="left:162.39px;top:371px;font-size:16.5px;color:#08140a;transform:scale(1.0000,1.05);transform-origin:0 14px;">80.25</span>
<span class="t" style="left:162.39px;top:396px;font-size:16.5px;color:#08140a;transform:scale(1.0000,1.05);transform-origin:0 14px;">80.25</span>
<span class="t" style="left:162.39px;top:420px;font-size:16.5px;color:#08140a;transform:scale(1.0000,1.05);transform-origin:0 14px;">80.25</span>
<span class="t" style="left:162.39px;top:444px;font-size:16.5px;color:#08140a;transform:scale(1.0000,1.05);transform-origin:0 14px;">80.25</span>
<span class="t" style="left:166.97px;top:469px;font-size:16.5px;color:#08140a;transform:scale(1.0000,1.05);transform-origin:0 14px;">8000</span>
<span class="t" style="left:144.03px;top:494px;font-size:16.5px;color:#08140a;transform:scale(1.0000,1.05);transform-origin:0 14px;">8000.25</span>
<span class="t" style="left:144.03px;top:518px;font-size:16.5px;color:#08140a;transform:scale(1.0000,1.05);transform-origin:0 14px;">8000.25</span>
<span class="t" style="left:144.03px;top:542px;font-size:16.5px;color:#08140a;transform:scale(1.0000,1.05);transform-origin:0 14px;">8000.25</span>
<span class="t" style="left:210.40px;top:273px;font-size:16.5px;color:#08140a;transform:scale(0.9826,1.05);transform-origin:0 14px;">80.00</span>
<span class="t" style="left:122.00px;top:576px;font-size:14px;color:#222;font-weight:700;transform:scale(0.8781,1);transform-origin:0 12px;">Sheet1</span>
<span class="t" style="left:15.80px;top:608px;font-size:10px;color:#fff;transform:scale(0.9652,1);transform-origin:0 8px;">Ready</span>
<span class="t" style="left:111.20px;top:608px;font-size:10px;color:#fff;transform:scale(1.0124,1);transform-origin:0 8px;">Accessibility: Good to go</span>
<span class="t" style="left:675.80px;top:608px;font-size:10px;color:#fff;transform:scale(0.9928,1);transform-origin:0 8px;">100%</span>
</div>
</body></html>
